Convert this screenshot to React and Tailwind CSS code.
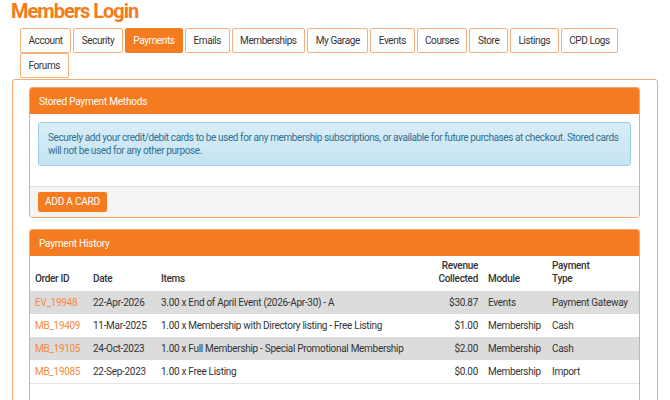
import React from "react";

const tabs = [
  "Account",
  "Security",
  "Payments",
  "Emails",
  "Memberships",
  "My Garage",
  "Events",
  "Courses",
  "Store",
  "Listings",
  "CPD Logs",
  "Forums",
];

const payments = [
  {
    id: "EV_19948",
    date: "22-Apr-2026",
    item: "3.00 x End of April Event (2026-Apr-30) - A",
    revenue: "$30.87",
    module: "Events",
    type: "Payment Gateway",
  },
  {
    id: "MB_19409",
    date: "11-Mar-2025",
    item: "1.00 x Membership with Directory listing - Free Listing",
    revenue: "$1.00",
    module: "Membership",
    type: "Cash",
  },
  {
    id: "MB_19105",
    date: "24-Oct-2023",
    item: "1.00 x Full Membership - Special Promotional Membership",
    revenue: "$2.00",
    module: "Membership",
    type: "Cash",
  },
  {
    id: "MB_19085",
    date: "22-Sep-2023",
    item: "1.00 x Free Listing",
    revenue: "$0.00",
    module: "Membership",
    type: "Import",
  },
];

function Panel({ title, children }) {
  return (
    <div className="shrink-0 border border-[#f6a76c] rounded-[3px] overflow-hidden bg-white">
      <div className="h-[26px] bg-[#f47b20] px-[9px] flex items-center text-white text-[10px] tracking-[-0.2px]">
        {title}
      </div>
      {children}
    </div>
  );
}

export default function App() {
  return (
    <div className="w-[670px] h-[400px] overflow-hidden bg-white font-['Roboto',sans-serif] text-[#333]">
      {/* PAGE TITLE */}
      <h1 className="pl-[11px] pt-[1px] h-[28px] text-[20px] leading-[20px] font-bold text-[#f47b20] tracking-[-1px]">
        Members Login
      </h1>

      {/* TABS */}
      <div className="ml-[20px] w-[620px] flex flex-wrap gap-x-[2px]">
        {tabs.map((tab) => (
          <div
            key={tab}
            className={
              tab === "Payments"
                ? "h-[25px] px-[7.5px] flex items-center border border-[#f47b20] rounded-[2px] bg-[#f47b20] text-white text-[10px] tracking-[-0.4px]"
                : "h-[25px] px-[7.5px] flex items-center border border-[#f8b07a] rounded-[2px] bg-white text-[#333] text-[10px] tracking-[-0.4px]"
            }
          >
            {tab}
          </div>
        ))}
      </div>

      {/* CONTENT BOX */}
      <div className="mx-[12px] mt-px h-[330px] border border-[#f8a86a] rounded-[3px] pl-[16px] pr-[17px] pt-[7px] flex flex-col gap-[11px]">
        <Panel title="Stored Payment Methods">
          <div className="p-[8px] pb-[20px]">
            <div className="border border-[#9acfea] rounded-[3px] bg-gradient-to-b from-[#d9edf7] to-[#c4e3f3] px-[9px] py-[8px] text-[#31708f] text-[10px] leading-[13px] tracking-[-0.4px]">
              Securely add your credit/debit cards to be used for any membership
              subscriptions, or available for future purchases at checkout.
              Stored cards will not be used for any other purpose.
            </div>
          </div>
          <div className="h-[31px] bg-[#f4f4f4] border-t border-[#e0e0e0] px-[8px] flex items-center">
            <button className="h-[20px] px-[7px] rounded-[2px] bg-[#f47b20] text-white text-[10px] leading-[20px] tracking-[-0.2px]">
              ADD A CARD
            </button>
          </div>
        </Panel>

        <Panel title="Payment History">
          <table className="w-full table-fixed text-[10px] tracking-[-0.3px] leading-[13px] border-b border-[#e4e4e4]">
            <colgroup>
              <col className="w-[58px]" />
              <col className="w-[68px]" />
              <col />
              <col className="w-[50px]" />
              <col className="w-[64px]" />
              <col className="w-[92px]" />
            </colgroup>
            <thead>
              <tr className="h-[35px]">
                <th className="px-[5px] pb-[6px] align-bottom text-left font-medium">Order ID</th>
                <th className="px-[5px] pb-[6px] align-bottom text-left font-medium">Date</th>
                <th className="px-[5px] pb-[6px] align-bottom text-left font-medium">Items</th>
                <th className="px-[5px] pb-[6px] align-bottom text-right font-medium">
                  Revenue
                  <br />
                  Collected
                </th>
                <th className="px-[5px] pb-[6px] align-bottom text-left font-medium">Module</th>
                <th className="px-[5px] pb-[6px] align-bottom text-left font-medium">
                  Payment
                  <br />
                  Type
                </th>
              </tr>
            </thead>
            <tbody>
              {payments.map((p, i) => (
                <tr key={p.id} className={i % 2 === 0 ? "h-[23px] bg-[#dcdcdc]" : "h-[23px] bg-white"}>
                  <td className="px-[5px] text-[#f58b3d]">{p.id}</td>
                  <td className="px-[5px]">{p.date}</td>
                  <td className="px-[5px] whitespace-nowrap">{p.item}</td>
                  <td className="px-[5px] text-right">{p.revenue}</td>
                  <td className="px-[5px]">{p.module}</td>
                  <td className="px-[5px]">{p.type}</td>
                </tr>
              ))}
            </tbody>
          </table>
          <div className="h-[40px]" />
        </Panel>
      </div>
    </div>
  );
}
